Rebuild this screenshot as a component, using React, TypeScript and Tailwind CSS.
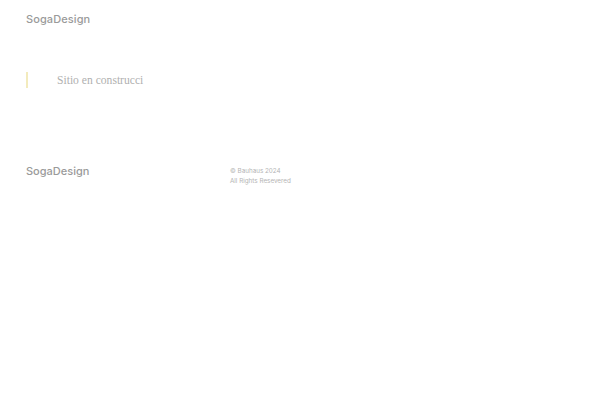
export default function App() {
  return (
    <div className="w-[600px] h-[400px] bg-white overflow-hidden" style={{ fontFamily: "Inter, 'DejaVu Sans', sans-serif" }}>
      <header className="pl-[26px] pt-[11px] h-[40px]">
        <div className="text-[11px] font-medium text-[#9a9a9a] tracking-[0.1px]">SogaDesign</div>
      </header>
      <section className="pl-[26px] pt-[32px] h-[118px]">
        <div className="flex items-center border-l-2 border-[#f3ebbd] h-[16px]">
          <span className="pl-[29px] pt-[2px] text-[11.6px] text-[#b0b0b0]" style={{ fontFamily: "'Liberation Serif', serif" }}>Sitio en construcci</span>
        </div>
      </section>
      <footer className="flex pl-[26px]">
        <div className="w-[204px] text-[11px] font-medium text-[#9a9a9a] pt-[5px]">SogaDesign</div>
        <div className="text-[6.3px] leading-[10px] text-[#b4b4b4] pt-[8px]">
          <div>© Bauhaus 2024</div>
          <div>All Rights Resevered</div>
        </div>
      </footer>
    </div>
  );
}
